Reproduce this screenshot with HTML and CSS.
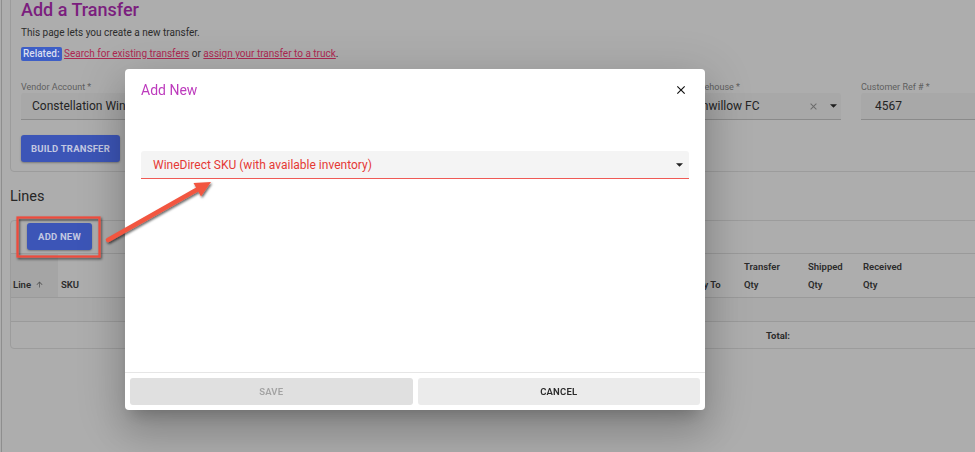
FILE: index.html
```html
<!DOCTYPE html>
<html lang="en">
<head>
<meta charset="utf-8">
<title>Add a Transfer</title>
<link rel="stylesheet" href="styles.css">
</head>
<body>
<div class="app">
  <main class="page">
    <section class="card form-card">
      <h1 class="title">Add a Transfer</h1>
      <p class="intro">This page lets you create a new transfer.</p>
      <p class="related"><span class="badge">Related:</span> <a href="#" class="link">Search for existing transfers</a> or <a href="#" class="link">assign your transfer to a truck</a>.</p>
      <div class="fields">
        <div class="field f-vendor">
          <label class="field-label">Vendor Account *</label>
          <div class="input">Constellation Wines U.S.</div>
        </div>
        <div class="field f-type">
          <label class="field-label">Transfer Type *</label>
          <div class="input">Standard</div>
        </div>
        <div class="field f-wh">
          <label class="field-label">Ship To Warehouse *</label>
          <div class="input select-input">
            <span class="value">Greenwillow FC</span>
            <svg class="clear-icon" viewBox="0 0 24 24"><path d="M19 6.41L17.59 5 12 10.59 6.41 5 5 6.41 10.59 12 5 17.59 6.41 19 12 13.41 17.59 19 19 17.59 13.41 12z"/></svg>
            <svg class="caret" viewBox="7 10 10 5"><path d="M7 10l5 5 5-5z"/></svg>
          </div>
        </div>
        <div class="field f-ref">
          <label class="field-label">Customer Ref # *</label>
          <div class="input ref-input">4567</div>
        </div>
      </div>
      <button class="btn btn-primary btn-build">BUILD TRANSFER</button>
    </section>

    <h2 class="section-title">Lines</h2>
    <section class="card lines-card">
      <div class="toolbar">
        <button class="btn btn-primary btn-add">ADD NEW</button>
      </div>
      <div class="table">
        <div class="row head-row">
          <div class="cell sorted">Line <svg class="sort-icon" viewBox="0 0 24 24"><path d="M4 12l1.41 1.41L11 7.830V20h2V7.83l5.58 5.59L20 12l-8-8-8 8z"/></svg></div>
          <div class="cell">SKU</div>
          <div class="cell">Description</div>
          <div class="cell">Apply To</div>
          <div class="cell">Transfer<br>Qty</div>
          <div class="cell">Shipped<br>Qty</div>
          <div class="cell">Received<br>Qty</div>
          <div class="cell"></div>
        </div>
        <div class="row empty-row"></div>
        <div class="row total-row">
          <div class="cell"></div>
          <div class="cell"></div>
          <div class="cell"></div>
          <div class="cell"></div>
          <div class="cell total-label">Total:</div>
          <div class="cell"></div>
          <div class="cell"></div>
          <div class="cell"></div>
        </div>
      </div>
    </section>
  </main>
</div>

<div class="dialog" role="dialog" aria-label="Add New">
  <header class="dialog-head">
    <h3 class="dialog-title">Add New</h3>
    <button class="close-btn" aria-label="Close">
      <svg viewBox="0 0 24 24"><path d="M19 6.41L17.59 5 12 10.59 6.41 5 5 6.41 10.59 12 5 17.59 6.41 19 12 13.41 17.59 19 19 17.59 13.41 12z"/></svg>
    </button>
  </header>
  <div class="dialog-body">
    <div class="select-box">
      <span class="select-text">WineDirect SKU (with available inventory)</span>
      <svg class="caret dark" viewBox="7 10 10 5"><path d="M7 10l5 5 5-5z"/></svg>
    </div>
  </div>
  <footer class="dialog-foot">
    <button class="dlg-btn save" disabled>SAVE</button>
    <button class="dlg-btn cancel">CANCEL</button>
  </footer>
</div>

<svg class="annotations" width="975" height="452" viewBox="0 0 975 452">
  <defs>
    <filter id="shadow" x="-20%" y="-20%" width="140%" height="140%">
      <feDropShadow dx="1.2" dy="1.6" stdDeviation="1" flood-color="#000" flood-opacity="0.6"/>
    </filter>
  </defs>
  <rect x="17.5" y="217.5" width="82" height="39" fill="none" stroke="#ee4b3c" stroke-width="2.2" filter="url(#shadow)"/>
  <g filter="url(#shadow)">
    <line x1="108" y1="240" x2="199" y2="188.5" stroke="#f25641" stroke-width="4.5" stroke-linecap="round"/>
    <polygon points="211,182 201,196.5 193.5,183" fill="#f25641"/>
  </g>
</svg>
</body>
</html>
```

FILE: styles.css
```css
* { box-sizing: border-box; }

html, body {
  margin: 0;
  width: 975px;
  height: 452px;
  overflow: hidden;
}

body {
  background: #adadad;
  font-family: Roboto, "Liberation Sans", Arial, sans-serif;
  color: #2a2a2a;
  position: relative;
}

.app {
  display: flow-root;
  margin-left: 1px;
  border-left: 1px solid #8e8e8e;
  height: 452px;
}

.page {
  width: 1100px;
  padding-left: 8px;
}

.card {
  border: 1px solid #9c9c9c;
  border-radius: 4px;
}

.form-card {
  margin-top: -11px;
  padding: 10px 10px 9px;
}

.title {
  margin: 0;
  font-size: 18px;
  line-height: 20px;
  font-weight: 500;
  color: #7b1e7e;
}

.intro {
  margin: 6px 0 0;
  font-size: 10px;
  line-height: 14px;
  color: #2c2c2c;
}

.related {
  margin: 6px 0 0;
  font-size: 10px;
  line-height: 16px;
  color: #2c2c2c;
}

.badge {
  display: inline-block;
  background: #3d5ec6;
  color: #d8ddf0;
  font-weight: 500;
  line-height: 14px;
  padding: 0 2px;
  border-radius: 2px;
}

.link {
  color: #ad2852;
  text-decoration: underline;
}

.fields {
  display: flex;
  gap: 20px;
  margin-top: 19px;
}

.f-vendor { width: 300px; }
.f-type { width: 296px; }
.f-wh { width: 184px; }
.f-ref { width: 184px; }

.field-label {
  display: block;
  font-size: 9px;
  line-height: 12px;
  color: #5e5e5e;
}

.input {
  height: 27px;
  display: flex;
  align-items: center;
  padding: 0 11px;
  background: #a8a8a8;
  border-bottom: 1px solid #8a8a8a;
  border-radius: 3px 3px 0 0;
  font-size: 12px;
  color: #242424;
  white-space: nowrap;
  overflow: hidden;
}

.ref-input { padding-left: 14px; }

.select-input { padding: 0 4px 0 20px; }
.select-input .value { flex: 1; }

.clear-icon {
  width: 11px;
  height: 11px;
  fill: #6a6a6a;
  margin-right: 11px;
}

.caret {
  width: 7px;
  height: 4px;
  fill: #1e1e1e;
}

.btn {
  border: none;
  border-radius: 3px;
  font-family: inherit;
  font-weight: 700;
  font-size: 9.5px;
  letter-spacing: 0.2px;
  height: 27px;
  padding: 0;
  display: block;
}

.btn-primary {
  background: #3c55b7;
  color: #c3c8e2;
  box-shadow: 0 1px 2px rgba(0, 0, 0, 0.3);
}

.btn-build {
  margin-top: 15px;
  width: 99px;
}

.btn-add { width: 65px; }

.section-title {
  margin: 15px 0 0;
  font-size: 14.5px;
  line-height: 20px;
  font-weight: 400;
  color: #262626;
}

.lines-card {
  margin-top: 13px;
}

.toolbar {
  padding: 2px 16px 3px;
  border-bottom: 1px solid #9a9a9a;
}

.row {
  display: grid;
  grid-template-columns: 47px 342px 281px 60px 64px 55px 80px 1fr;
  border-bottom: 1px solid #9a9a9a;
}

.row:last-child { border-bottom: none; }

.head-row {
  height: 44px;
  font-size: 9.5px;
  font-weight: 600;
  line-height: 18px;
  color: #2b2b2b;
}

.head-row .cell {
  display: flex;
  align-items: flex-end;
  padding: 3px 3px 3px;
}

.head-row .sorted {
  background: #a5a5a5;
  padding-left: 2px;
}

.sort-icon {
  width: 9px;
  height: 9px;
  fill: #555;
  margin: 0 0 5px 4px;
}

.empty-row {
  height: 24px;
  background: #aaaaaa;
}

.total-row {
  height: 26px;
  font-size: 9.5px;
  font-weight: 700;
  color: #2b2b2b;
}

.total-row .cell {
  display: flex;
  align-items: center;
}

.total-label { padding-left: 25px; }

/* Dialog */
.dialog {
  position: fixed;
  left: 125px;
  top: 69px;
  width: 580px;
  height: 341px;
  background: #fff;
  border-radius: 4px;
  box-shadow: 0 11px 15px -7px rgba(0, 0, 0, 0.2), 0 24px 38px 3px rgba(0, 0, 0, 0.14), 0 9px 46px 8px rgba(0, 0, 0, 0.12);
  display: flex;
  flex-direction: column;
}

.dialog-head {
  display: flex;
  align-items: center;
  justify-content: space-between;
  padding: 12px 17px 0 16px;
}

.dialog-title {
  margin: 0;
  font-size: 14px;
  line-height: 18px;
  font-weight: 400;
  color: #bd3bbd;
}

.close-btn {
  border: none;
  background: none;
  padding: 0;
  width: 14px;
  height: 14px;
  display: flex;
}

.close-btn svg {
  width: 14px;
  height: 14px;
  fill: #111;
}

.dialog-body {
  flex: 1;
  padding: 52px 16px 0;
}

.select-box {
  height: 28px;
  display: flex;
  align-items: center;
  justify-content: space-between;
  padding: 0 6px 0 12px;
  background: #f4f4f4;
  border-bottom: 1px solid #ef5a55;
  border-radius: 3px 3px 0 0;
}

.select-text {
  font-size: 12px;
  color: #e53935;
}

.caret.dark { fill: #222; }

.dialog-foot {
  display: flex;
  gap: 5px;
  padding: 5px;
  border-top: 1px solid #e6e6e6;
}

.dlg-btn {
  flex: 1;
  height: 27px;
  border: none;
  border-radius: 3px;
  font-family: inherit;
  font-size: 9.5px;
  font-weight: 600;
  letter-spacing: 0.2px;
}

.dlg-btn.save {
  background: #e0e0e0;
  color: #a3a3a3;
}

.dlg-btn.cancel {
  background: #ebebeb;
  color: #2a2a2a;
}

.annotations {
  position: absolute;
  left: 0;
  top: 0;
  pointer-events: none;
}
```
